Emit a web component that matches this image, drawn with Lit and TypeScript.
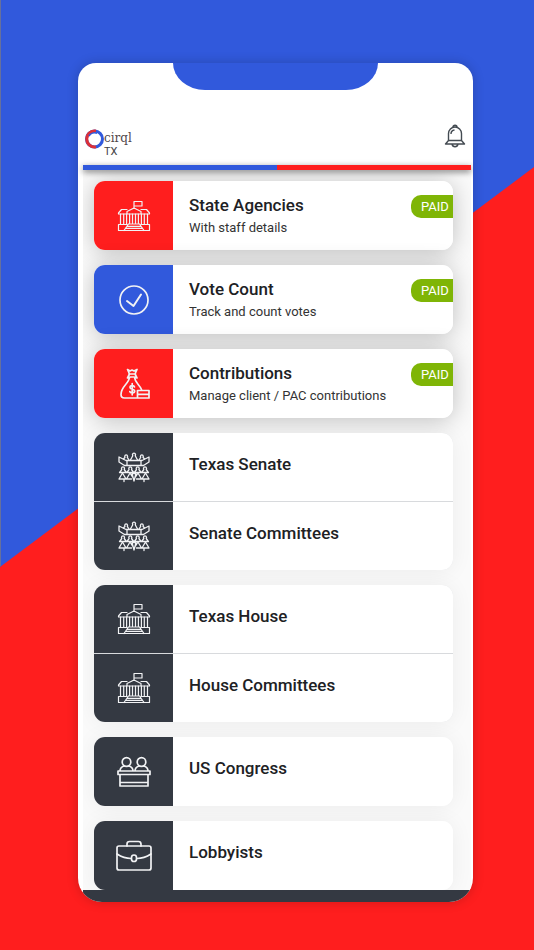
import { LitElement, html, css, svg, nothing } from "lit";
import { customElement, property } from "lit/decorators.js";

type Entry = { title: string; note?: string; icon: string; tone: string };

const groups: Entry[][] = [
  [{ title: "State Agencies", note: "With staff details", icon: "capitol", tone: "red" }],
  [{ title: "Vote Count", note: "Track and count votes", icon: "check", tone: "blue" }],
  [{ title: "Contributions", note: "Manage client / PAC contributions", icon: "money", tone: "red" }],
  [
    { title: "Texas Senate", icon: "senate", tone: "dark" },
    { title: "Senate Committees", icon: "senate", tone: "dark" },
  ],
  [
    { title: "Texas House", icon: "capitol", tone: "dark" },
    { title: "House Committees", icon: "capitol", tone: "dark" },
  ],
  [{ title: "US Congress", icon: "congress", tone: "dark" }],
  [{ title: "Lobbyists", icon: "case", tone: "dark" }],
];

// A small seated figure: round head over sloping shoulders.
const figure = (x: number, y: number, h: number) =>
  `M${x - 3.4} ${y + h}L${x - 1.2} ${y + 3}A1.5 1.7 0 1 1 ${x + 1.2} ${y + 3}L${x + 3.4} ${y + h}`;

// All tile icons share a 40 x 40 box.
const icons: Record<string, unknown> = {
  capitol: svg`<g stroke-width="1.2">
    <path d="M20 12.500V5.500h8V10h-8M13 15.500l7-3.500 7 3.500v2.500H13zM13 13.500H7.500L4.500 17v1H13M27 13.500h5.500l3 3.500v1H27"/>
    <path d="M6.500 18v10.500M9.700 18v10.500M12.600 18v10.500M27.400 18v10.500M30.300 18v10.500M33.500 18v10.500M15.600 18v9.500M18.500 18v9.500M21.500 18v9.500M24.400 18v9.500"/>
    <path d="M4.500 34.500v-6h8.500M35.500 34.500v-6H27M4.500 34.500h31M14.500 28L10 34.500M25.500 28l4.500 6.500M14.500 28h11M13.500 30.300h13M12 32.400h16"/></g>`,
  check: svg`<circle cx="20" cy="20" r="14"/><path d="M13 21l6.500 5L27 14.500" stroke-width="2"/>`,
  money: svg`<path d="M13.500 5.500l2.500 1.500 2-1 2 1 3-1.500-2 4.500 2 4-3-1h-3.500l-3 1 2-4zM15 10h6.500M15.500 13.500c-.5 6-8.500 9-8.500 17 0 2.500 1.500 3.500 3.500 3.500H23M20.500 13.500c.5 5 5 7 7 12M23.500 26.500h11.500v7.500H23.500zM23.500 30.300H35"/>
    <path d="M20.500 23c-.5-1.800-4.500-1.800-4.500.5 0 2.200 4.700 1.300 4.700 3.600 0 2.300-4.500 2.300-4.900.4M18.200 19.500v11.300"/>`,
  senate: svg`<g stroke-width="1.300">
    <path d="M10.500 18.500L5 15v-5l7 3.500h16L35 10v5l-5.500 3.500zM13 13.500v5M27 13.500v5"/>
    <path d="${figure(20, 5.8, 7)}M9.500 12L11 10.300A1.400 1.600 0 1 1 13.300 10.300L15 13M25 13L26.700 10.300A1.400 1.600 0 1 1 29 10.300L30.500 12"/>
    <path d="${figure(9, 19.5, 6)}${figure(16.300, 19.5, 6)}${figure(23.700, 19.5, 6)}${figure(31, 19.5, 6)}M5.500 25.500h29"/>
    <path d="M5 32l3.500-6 3.500 6zM12.500 32l3.500-6 2.500 4M28 32l3.500-6 3.500 6zM21.500 30l2.500-4 3.500 6M12.500 32h5M22.500 32h5M18 26.500h4L20 34zM10 32v2.500M30 32v2.500"/></g>`,
  congress: svg`<circle cx="12.500" cy="10" r="4.300"/><circle cx="27.500" cy="10" r="4.300"/>
    <path d="M6 19q0-4 4.500-5M14.500 14q4.500 1 4.500 5M21 19q0-4 4.500-5M29.500 14q4.500 1 4.500 5M4 19h32v3.500H4zM6 22.500V34h28V22.500M6 30.500h28"/>`,
  case: svg`<rect x="3" y="10" width="34" height="24" rx="2"/>
    <path d="M13 10V8q0-2.500 2.500-2.500h9q2.500 0 2.500 2.500v2M3 18q7 4.500 14 4.500M23 22.500q7 0 14-4.500"/><rect x="17.500" y="19" width="5" height="6.500" rx="2.500"/>`,
};

@customElement("menu-row")
class MenuRow extends LitElement {
  @property({ attribute: false }) entry!: Entry;

  static styles = css`
    :host { display: block; }
    .row {
      display: flex; width: 100%; height: var(--row-height, 69px); padding: 0; border: 0;
      background: #fff; color: #202124; text-align: left;
      font-family: Roboto, sans-serif; cursor: pointer;
    }
    .tile {
      flex: none; width: 79px; height: 100%;
      display: flex; align-items: center; justify-content: center;
    }
    .red { background: #ff1e1e; }
    .blue { background: #3159dc; }
    .dark { background: #343942; }
    .icon {
      width: 40px; height: 40px; fill: none; stroke: #f1f2f4; stroke-width: 1.7;
      stroke-linejoin: round; stroke-linecap: round;
    }
    .text { flex: 1; min-width: 0; padding: 12px 0 0 16px; }
    .title { display: block; font-size: 17px; line-height: 24px; font-weight: 500; }
    .plain { padding-top: 19px; }
    .note { display: block; font-size: 13px; line-height: 21px; color: #333; white-space: nowrap; }
    .badge {
      position: absolute; right: 0; top: 14px; width: 42px; height: 23px;
      box-sizing: border-box; padding-left: 10px; border-radius: 10px 0 0 10px;
      background: #7fb506; color: #fff; font-size: 13px; line-height: 23px;
    }
  `;

  render() {
    const { title, note, icon, tone } = this.entry;
    return html`<button class="row" type="button">
      <span class="tile ${tone}"><svg class="icon" viewBox="0 0 40 40" aria-hidden="true">${icons[icon]}</svg></span>
      <span class="text ${note ? "" : "plain"}">
        <span class="title">${title}</span>
        ${note ? html`<span class="note">${note}</span>` : nothing}
      </span>
      ${note ? html`<span class="badge">PAID</span>` : nothing}
    </button>`;
  }
}

@customElement("app-root")
class AppRoot extends LitElement {
  static styles = css`
    :host {
      display: block; box-sizing: border-box; min-height: 100vh;
      padding: 63px 61px 48px 78px; position: relative; overflow: hidden;
      font-family: Roboto, sans-serif;
    }
    .backdrop { position: absolute; inset: 0; width: 100%; height: 100%; }
    .phone {
      position: relative; overflow: hidden; background: #fff;
      border-radius: 18px 18px 24px 24px; box-shadow: 0 0 12px #0003;
    }
    .screen { padding: 0 2px 0 5px; }
    .notch {
      width: 205px; height: 27px; margin: 0 auto;
      background: #3159dc; border-radius: 0 0 32px 32px / 0 0 27px 27px;
    }
    .header {
      display: flex; justify-content: space-between; align-items: flex-start;
      height: 75px; box-sizing: border-box; padding: 34px 5px 0 1px;
    }
    .brand { display: flex; align-items: flex-start; padding-top: 5px; color: #51474a; text-decoration: none; }
    .ring { width: 20px; height: 20px; fill: none; stroke-width: 3; }
    .words { padding-top: 2px; }
    .name { display: block; font: 12px/14px "DejaVu Serif", serif; }
    .state { display: block; font-size: 11px; line-height: 13px; color: #444; }
    .bell { width: 22px; height: 24px; padding: 0; border: 0; background: none; }
    .bell svg { display: block; width: 22px; height: 24px; fill: none; stroke: #444b52; stroke-width: 1.4; stroke-linejoin: round; }
    .stripe {
      position: relative; z-index: 1; height: 5px;
      background: linear-gradient(90deg, #3159dc 50%, #ff1e1e 50%);
      box-shadow: 0 2px 6px #0008;
    }
    .list {
      display: flex; flex-direction: column; gap: 15px; overflow: hidden;
      padding: 11px 18px 0 11px; background: #fafafa;
    }
    .card { position: relative; border-radius: 11px; box-shadow: 0 1px 22px #0000000f; }
    .paid { box-shadow: 0 2px 24px #0000003d; }
    .pair { --row-height: 68px; }
    .clip {
      display: flex; flex-direction: column; gap: 1px; overflow: hidden;
      border-radius: 11px; background: #d8dadd;
    }
    .footer { height: 12px; background: #343942; position: relative; }
  `;

  render() {
    return html`
      <svg class="backdrop" viewBox="0 0 534 950" preserveAspectRatio="none" aria-hidden="true">
        <path fill="#ff1e1e" d="M0 0h534v950H0z" /><path fill="#3159dc" d="M0 0h534v167L0 567z" />
        <path fill="#66709c" d="M0 0h1v566H0z" />
      </svg>
      <main class="phone">
        <div class="notch"></div>
        <div class="screen">
          <header class="header">
            <a class="brand" href="#">
              <svg class="ring" viewBox="0 0 20 20" aria-hidden="true">
                <circle cx="10.500" cy="10" r="8" stroke="#3159dc" />
                <path d="M12 2.100a8 8 0 1 0 0 15.800" stroke="#dc3038" />
                <path d="M5 7.200a6.300 6.300 0 0 1 8-3" stroke="#3159dc" stroke-width="1.500" />
              </svg>
              <span class="words"><span class="name">cirql</span><span class="state">TX</span></span>
            </a>
            <button class="bell" type="button" aria-label="Notifications">
              <svg viewBox="0 0 22 24" aria-hidden="true">
                <path d="M4.500 16.500V9.500a6.500 6.500 0 0 1 13 0v7l3 3.500h-19zM4.500 16.500h13M9 3Q9 1.200 11 1.200T13 3M8 20q.5 2.700 3 2.700t3-2.700M7 10q0-3.500 3.500-4" />
              </svg>
            </button>
          </header>
          <div class="stripe"></div>
          <nav class="list" aria-label="Directory">
            ${groups.map((g) => html`<section class="card ${g[0].note ? "paid" : ""} ${g.length > 1 ? "pair" : ""}">
              <div class="clip">${g.map((e) => html`<menu-row .entry=${e}></menu-row>`)}</div>
            </section>`)}
          </nav>
          <footer class="footer"></footer>
        </div>
      </main>
    `;
  }
}
